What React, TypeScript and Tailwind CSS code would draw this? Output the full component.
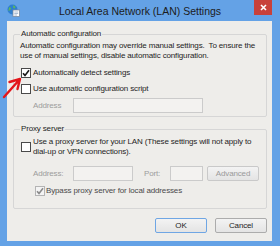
function CheckBox({ checked, disabled }: { checked?: boolean; disabled?: boolean }) {
  return (
    <span
      className={
        "flex w-[10px] h-[10px] shrink-0 items-center justify-center border " +
        (disabled ? "border-[#b4b4b4] bg-[#f4f4f4]" : "border-[#4a4a4a] bg-white")
      }
    >
      {checked && (
        <svg width="8" height="8" viewBox="0 0 8 8" fill="none">
          <path
            d="M1 4.2L3 6.4L7 1.2"
            stroke={disabled ? "#8a8a8a" : "#1a1a1a"}
            strokeWidth="1.6"
          />
        </svg>
      )}
    </span>
  )
}

function WinButton({ label, primary, disabled }: { label: string; primary?: boolean; disabled?: boolean }) {
  return (
    <div
      className={
        "flex h-[15px] w-[52px] items-center justify-center rounded-[2px] border bg-gradient-to-b from-[#f3f3f3] to-[#e4e4e4] " +
        (primary ? "border-[#6fa6e4]" : disabled ? "border-[#c9c9c9]" : "border-[#acacac]") +
        (disabled ? " text-[#9a9a9a]" : " text-[#1e1e1e]")
      }
    >
      {label}
    </div>
  )
}

function AppIcon() {
  return (
    <svg width="13" height="13" viewBox="0 0 13 13">
      <circle cx="5.5" cy="5.5" r="5" fill="#2f7fd0" />
      <path d="M2 3.5C3.5 2.5 4.5 4 3.5 5.5S1.5 7 1.5 7" fill="#5cb85c" />
      <path d="M6 1.5C8 1.5 9 3 8 4S6 4 6 1.5Z" fill="#5cb85c" />
      <rect x="6" y="6" width="6.5" height="6.5" fill="#ffffff" stroke="#7a8aa0" strokeWidth="0.8" />
      <path d="M7.3 8H11.2M7.3 9.5H11.2M7.3 11H10" stroke="#8aa0c0" strokeWidth="0.7" />
    </svg>
  )
}

export default function App() {
  return (
    <div className="relative flex h-[246px] w-[280px] flex-col overflow-hidden whitespace-nowrap bg-[#64a2e6] font-['Liberation_Sans',Arial,sans-serif] text-[8px] leading-[10px] tracking-[-0.15px] text-[#1e1e1e]">
      {/* Title bar */}
      <div className="grid h-[21px] shrink-0 grid-cols-[1fr_auto_1fr] items-start">
        <div className="pl-[7px] pt-[4px]">
          <AppIcon />
        </div>
        <div className="pt-[5px] text-[10.5px] leading-[12px] tracking-normal text-[#1c1c1c]">
          Local Area Network (LAN) Settings
        </div>
        <div className="flex justify-end pr-[8px]">
          <div className="flex h-[15px] w-[18px] items-center justify-center bg-[#c8413a]">
            <svg width="7" height="7" viewBox="0 0 7 7">
              <path d="M1 1L6 6M6 1L1 6" stroke="#ffffff" strokeWidth="1.6" />
            </svg>
          </div>
        </div>
      </div>

      {/* Client area */}
      <div className="mx-[7px] mr-[8px] flex h-[220px] flex-col bg-[#eeedea] pl-[6px] pr-[5px] pt-[8px]">
        <fieldset className="rounded-[2px] border border-[#d6d6d6] pb-[3px] pl-[6px] pr-[4px]">
          <legend className="px-[1px]">Automatic configuration</legend>
          <p className="mt-[2px]">
            Automatic configuration may override manual settings.{"\u00a0"} To ensure the
            <br />
            use of manual settings, disable automatic configuration.
          </p>
          <div className="mt-[7px] flex items-center gap-[2px] pl-[1px]">
            <CheckBox checked />
            <span>Automatically detect settings</span>
          </div>
          <div className="mt-[6px] flex items-center gap-[2px] pl-[1px]">
            <CheckBox />
            <span>Use automatic configuration script</span>
          </div>
          <div className="mt-[4px] flex items-center pl-[13px]">
            <span className="w-[40px] text-[#9c9c9c]">Address</span>
            <span className="h-[15px] w-[130px] border border-[#cbcbcb] bg-[#f3f2f0]" />
          </div>
        </fieldset>

        <fieldset className="mt-[7px] rounded-[2px] border border-[#d6d6d6] pb-[12px] pl-[6px] pr-[4px]">
          <legend className="px-[1px]">Proxy server</legend>
          <div className="mt-[3px] flex items-center gap-[2px] pl-[1px]">
            <CheckBox />
            <span>
              Use a proxy server for your LAN (These settings will not apply to
              <br />
              dial-up or VPN connections).
            </span>
          </div>
          <div className="mt-[9px] flex items-center pl-[13px]">
            <span className="w-[40px] text-[#9c9c9c]">Address:</span>
            <span className="h-[15px] w-[60px] border border-[#cbcbcb] bg-[#f3f2f0]" />
            <span className="ml-[11px] w-[26px] text-[#9c9c9c]">Port:</span>
            <span className="h-[15px] w-[33px] border border-[#cbcbcb] bg-[#f3f2f0]" />
            <span className="ml-[4px]">
              <WinButton label="Advanced" disabled />
            </span>
          </div>
          <div className="mt-[5px] flex items-center gap-[1px] pl-[15px]">
            <CheckBox checked disabled />
            <span className="text-[#4a4a4a]">Bypass proxy server for local addresses</span>
          </div>
        </fieldset>

        <div className="mt-[9px] flex justify-end gap-[8px]">
          <WinButton label="OK" primary />
          <WinButton label="Cancel" />
        </div>
      </div>

      {/* Red annotation arrow */}
      <svg className="absolute left-0 top-[74px]" width="26" height="28" viewBox="0 74 26 28" fill="none">
        <path
          d="M4 97L20 79M9.5 82L20 79L17.5 89"
          stroke="#e3161b"
          strokeWidth="2.4"
          strokeLinecap="round"
          strokeLinejoin="round"
        />
      </svg>
    </div>
  )
}
